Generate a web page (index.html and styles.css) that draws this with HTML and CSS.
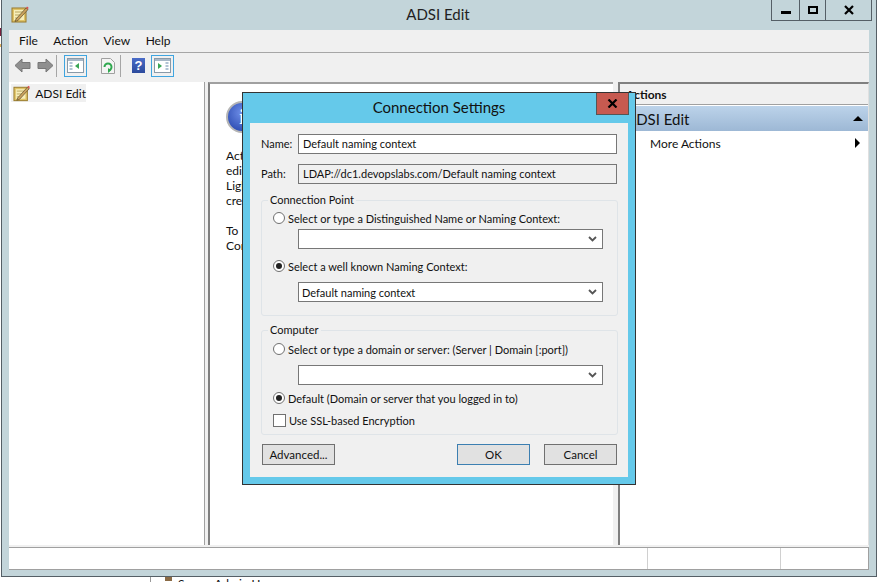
FILE: index.html
```html
<!DOCTYPE html>
<html>
	<head>
		<meta charset="UTF-8">
		<title>ADSI Edit</title>
		<link rel="stylesheet" href="styles.css">
	</head>
	<body>
		<div class="behind">
			<span class="behind-icon"></span>
			<span class="behind-text">Server Admin Users</span>
		</div>
		<div class="window">
			<div class="titlebar">
				<svg class="app-icon" width="18" height="18" viewBox="0 0 18 18">
					<rect x="1" y="3" width="14" height="14" fill="#e0c468" stroke="#97792a"/>
					<rect x="3" y="5" width="10" height="10" fill="#f7eeb9"/>
					<path d="M4 7h8M4 10h6M4 13h4" stroke="#b9a560"/>
					<path d="M5 14l10-11 2 1.500-10 11-3 1z" fill="#caa25e" stroke="#5d4d2c" stroke-width=".7"/>
					<path d="M15 3l1-1.500 1.500 1-.5 2z" fill="#d9534f"/>
				</svg>
				<div class="title">ADSI Edit</div>
				<div class="controls">
					<div class="ctl ctl-min"><i></i></div>
					<div class="ctl ctl-max"><i></i></div>
					<div class="ctl ctl-close">
						<svg width="12" height="10" viewBox="0 0 12 10"><path d="M2 1l8 8M10 1L2 9" stroke="#000" stroke-width="2.200"/></svg>
					</div>
				</div>
			</div>
			<div class="inner">
				<div class="menubar">
					<span>File</span><span>Action</span><span>View</span><span>Help</span>
				</div>
				<div class="toolbar">
					<svg class="tb-arrow" width="17" height="15" viewBox="0 0 17 15"><path d="M8 1L1 7.500 8 14v-3.500h8v-6H8z" fill="#8f8f8f" stroke="#777"/></svg>
					<svg class="tb-arrow" width="17" height="15" viewBox="0 0 17 15"><path d="M9 1l7 6.500L9 14v-3.500H1v-6h8z" fill="#8f8f8f" stroke="#777"/></svg>
					<div class="tb-sep"></div>
					<div class="tb-btn">
						<svg width="17" height="15" viewBox="0 0 17 15">
							<rect x=".5" y=".5" width="16" height="14" fill="#fff" stroke="#8a9aa8"/>
							<rect x="1" y="1" width="15" height="2" fill="#a8b8c8"/>
							<path d="M2.500 5h3M2.500 8h3M2.500 11h3" stroke="#6688aa" stroke-width="1.200"/>
							<path d="M12 5v6L8 8z" fill="#3aa655"/>
						</svg>
					</div>
					<svg class="tb-refresh" width="14" height="16" viewBox="0 0 14 16">
						<path d="M.5.500h9l4 4v11H.5z" fill="#f4f4f4" stroke="#a0a0a0"/>
						<path d="M3.500 9a3.500 3.500 0 1 1 3.500 3.500" fill="none" stroke="#2fa84f" stroke-width="2"/>
						<path d="M7 10v5l3-2.500z" fill="#2fa84f"/>
					</svg>
					<div class="tb-sep tb-sep2"></div>
					<div class="tb-help">?</div>
					<div class="tb-btn tb-btn2">
						<svg width="17" height="15" viewBox="0 0 17 15">
							<rect x=".5" y=".5" width="16" height="14" fill="#fff" stroke="#8a9aa8"/>
							<rect x="1" y="1" width="15" height="2" fill="#a8b8c8"/>
							<path d="M11.500 5h3M11.500 8h3M11.500 11h3" stroke="#6688aa" stroke-width="1.200"/>
							<path d="M4 5v6l4-3z" fill="#3aa655"/>
						</svg>
					</div>
				</div>
				<div class="panes">
					<div class="tree">
						<div class="tree-item">
							<svg width="18" height="18" viewBox="0 0 18 18">
								<rect x="1" y="3" width="14" height="14" fill="#e0c468" stroke="#97792a"/>
								<rect x="3" y="5" width="10" height="10" fill="#f7eeb9"/>
								<path d="M4 7h8M4 10h6M4 13h4" stroke="#b9a560"/>
								<path d="M5 14l10-11 2 1.500-10 11-3 1z" fill="#caa25e" stroke="#5d4d2c" stroke-width=".7"/>
								<path d="M15 3l1-1.500 1.500 1-.5 2z" fill="#d9534f"/>
							</svg>
							<span>ADSI Edit</span>
						</div>
					</div>
					<div class="center">
						<div class="info-icon">i</div>
						<p>Active Directory Service Interfaces Editor<br>editor for Active Directory objects and<br>Lightweight Directory Services data, and<br>create, modify and delete objects</p>
						<p>To connect, on the Action menu, click<br>Connect to</p>
					</div>
					<div class="actions">
						<div class="actions-head">Actions</div>
						<div class="actions-group"><span>ADSI Edit</span><i class="tri-up"></i></div>
						<div class="actions-row"><span>More Actions</span><i class="tri-right"></i></div>
					</div>
				</div>
				<div class="statusbar">
					<div class="st st1"></div>
					<div class="st st2"></div>
					<div class="st st3"></div>
				</div>
			</div>
		</div>

		<div class="dialog">
			<div class="dlg-title">
				<span>Connection Settings</span>
				<div class="dlg-close">
					<svg width="11" height="9" viewBox="0 0 11 9"><path d="M1.500 .5l8 8M9.500 .5l-8 8" stroke="#000" stroke-width="2.200"/></svg>
				</div>
			</div>
			<div class="dlg-body">
				<div class="field-row">
					<label>Name:</label>
					<input class="txt" type="text" value="Default naming context">
				</div>
				<div class="field-row field-row2">
					<label>Path:</label>
					<input class="txt txt-ro" type="text" value="LDAP://dc1.devopslabs.com/Default naming context" readonly>
				</div>

				<div class="group group1">
					<div class="legend">Connection Point</div>
					<div class="radio-row radio-row1"><span class="radio"></span>Select or type a Distinguished Name or Naming Context:</div>
					<div class="combo"><span></span><svg width="9" height="6" viewBox="0 0 9 6"><path d="M1 1l3.500 3.500L8 1" fill="none" stroke="#555" stroke-width="1.800"/></svg></div>
					<div class="radio-row radio-row1"><span class="radio on"></span>Select a well known Naming Context:</div>
					<div class="combo combo2"><span>Default naming context</span><svg width="9" height="6" viewBox="0 0 9 6"><path d="M1 1l3.500 3.500L8 1" fill="none" stroke="#555" stroke-width="1.800"/></svg></div>
				</div>

				<div class="group group2">
					<div class="legend">Computer</div>
					<div class="radio-row"><span class="radio"></span>Select or type a domain or server: (Server | Domain [:port])</div>
					<div class="combo combo2"><span></span><svg width="9" height="6" viewBox="0 0 9 6"><path d="M1 1l3.500 3.500L8 1" fill="none" stroke="#555" stroke-width="1.800"/></svg></div>
					<div class="radio-row radio-row3"><span class="radio on"></span>Default (Domain or server that you logged in to)</div>
					<div class="radio-row radio-row4"><span class="check"></span>Use SSL-based Encryption</div>
				</div>

				<div class="dlg-buttons">
					<button class="btn">Advanced...</button>
					<div class="spacer"></div>
					<button class="btn btn-ok">OK</button>
					<button class="btn">Cancel</button>
				</div>
			</div>
		</div>
	</body>
</html>
```

FILE: styles.css
```css
* {
	margin: 0;
	padding: 0;
	box-sizing: border-box;
}
html, body {
	width: 880px;
	height: 582px;
	overflow: hidden;
}
body {
	position: relative;
	background: #fff linear-gradient(#fff 28px, #7a1f3d 28px, #7a1f3d 36px, #fff 36px, #fff 44px, #e3b05a 44px, #e3b05a 47px, #fff 47px) no-repeat 0 0 / 1px 100%;
	font: 12px Lato, "Liberation Sans", sans-serif;
	color: #111;
}

/* stuff of the desktop that peeks out under the window */
.behind {
	position: absolute;
	left: 150px;
	top: 577px;
	width: 200px;
	height: 5px;
	border-left: 1px solid #999;
	display: flex;
	gap: 6px;
	overflow: hidden;
	padding-left: 14px;
}
.behind-icon {
	width: 7px;
	height: 4px;
	background: #8a6a45;
}
.behind-text {
	font-size: 12px;
	line-height: 14px;
}

.window {
	position: absolute;
	left: 1px;
	top: 0;
	width: 876px;
	height: 577px;
	background: #c3d5da;
	border: 1px solid #555f66;
	border-top: 0;
	display: flex;
	flex-direction: column;
}
.titlebar {
	height: 30px;
	flex: none;
	position: relative;
	display: flex;
	justify-content: center;
	align-items: center;
}
.app-icon {
	position: absolute;
	left: 9px;
	top: 5px;
}
.title {
	font-size: 15px;
	margin: -2px 0 0 -2px;
	color: #222;
}
.controls {
	position: absolute;
	left: 769px;
	top: 0;
	height: 21px;
	display: flex;
	border: 1px solid #555f66;
	border-top: 0;
}
.ctl {
	height: 20px;
	display: flex;
	align-items: center;
	justify-content: center;
	border-right: 1px solid #555f66;
}
.ctl-min { width: 28px; }
.ctl-max { width: 26px; }
.ctl-close { width: 45px; border-right: 0; }
.ctl-min i {
	display: block;
	width: 10px;
	height: 3px;
	background: #000;
	margin-top: 5px;
}
.ctl-max i {
	display: block;
	width: 10px;
	height: 8px;
	border: 2px solid #000;
	margin-top: -1px;
}

.inner {
	margin: 0 7px;
	width: 860px;
	height: 540px;
	flex: none;
	background: #f0f0f0;
	display: flex;
	flex-direction: column;
}
.menubar {
	height: 23px;
	flex: none;
	display: flex;
	align-items: center;
	gap: 15.500px;
	padding: 0 0 2px 10px;
	border-bottom: 1px solid #a6a6a6;
}
.toolbar {
	height: 29px;
	flex: none;
	display: flex;
	align-items: center;
	padding: 0 0 4px 5px;
}
.tb-arrow { margin-right: 6px; }
.tb-sep {
	width: 1px;
	height: 22px;
	background: #a6a6a6;
	margin: 0 7px 0 -4px;
}
.tb-btn {
	width: 23px;
	height: 22px;
	border: 1px solid #3fa5e0;
	display: flex;
	align-items: center;
	justify-content: center;
}
.tb-refresh { margin-left: 14px; }
.tb-sep2 { margin: 0 11px 0 5px; }
.tb-help {
	width: 13px;
	height: 15px;
	background: linear-gradient(#4a6cc8, #2c4a9c);
	color: #fff;
	font: bold 13px/15px "Liberation Sans", sans-serif;
	text-align: center;
	margin-right: 6px;
}

.panes {
	flex: 1;
	display: flex;
	gap: 3px;
	min-height: 0;
}
.tree {
	width: 196px;
	background: #fff;
	padding: 2px;
	border-right: 1px solid #a0a0a0;
}
.tree-item {
	display: inline-flex;
	align-items: center;
	gap: 5px;
	height: 18px;
	width: 75px;
	padding-left: 2px;
	background: #f0f0f0;
	white-space: nowrap;
}
.center {
	width: 405px;
	background: #fff;
	border-left: 2px solid #7f7f7f;
	border-top: 2px solid #a0a0a0;
	padding: 17px 0 0 16px;
	overflow: hidden;
	white-space: nowrap;
	line-height: 15px;
}
.center p {
	margin-bottom: 15px;
	word-spacing: 4px;
}
.info-icon {
	width: 32px;
	height: 32px;
	border-radius: 50%;
	background: radial-gradient(circle at 50% 35%, #6f8fe8, #1f3fa8);
	border: 2px solid #b5b5b5;
	color: #fff;
	font: bold 20px/28px "Liberation Serif", serif;
	text-align: center;
	margin-bottom: 15px;
}
.actions {
	width: 251px;
	margin-left: 2px;
	background: #fff;
	border-left: 2px solid #7f7f7f;
	border-top: 2px solid #808080;
	border-right: 1px solid #e0e0e0;
	white-space: nowrap;
}
.actions-head {
	height: 21px;
	font-weight: bold;
	line-height: 21px;
	padding-left: 6px;
	background: #f0f0f0;
	border-bottom: 1px solid #a0a0a0;
}
.actions-group {
	height: 25px;
	margin-top: 1px;
	display: flex;
	align-items: center;
	justify-content: space-between;
	padding: 0 5px 0 6px;
	background: linear-gradient(#bcd3ea, #9db8d5);
	font-size: 15px;
}
.tri-up {
	border: 5px solid transparent;
	border-top: 0;
	border-bottom: 5px solid #000;
}
.actions-row {
	height: 24px;
	display: flex;
	align-items: center;
	justify-content: space-between;
	padding: 0 8px 0 30px;
}
.tri-right {
	border: 5px solid transparent;
	border-right: 0;
	border-left: 5px solid #000;
}

.statusbar {
	height: 23px;
	flex: none;
	margin-top: 2px;
	background: #fff;
	border-top: 1px solid #a0a0a0;
	border-bottom: 1px solid #a0a0a0;
	display: flex;
}
.st {
	height: 100%;
	border-right: 1px solid #d0d0d0;
}
.st1 { width: 639px; }
.st2 { width: 133px; }
.st3 { flex: 1; border-right: 1px solid #a0a0a0; }

/* dialog */
.dialog {
	position: absolute;
	left: 242px;
	top: 92px;
	width: 394px;
	height: 393px;
	background: #65c9ea;
	border: 1px solid #333;
	padding: 0 7px 7px 7px;
	display: flex;
	flex-direction: column;
	font-size: 11px;
}
.dlg-title {
	height: 30px;
	flex: none;
	position: relative;
	display: flex;
	align-items: center;
	justify-content: center;
	font-size: 15px;
	color: #111;
	padding-bottom: 2px;
}
.dlg-close {
	position: absolute;
	right: -1px;
	top: 0;
	width: 33px;
	height: 22px;
	background: #c75a50;
	border: 1px solid #555;
	border-top: 0;
	display: flex;
	align-items: center;
	justify-content: center;
}
.dlg-body {
	flex: 1;
	background: #f0f0f0;
	padding: 11px 11px 0 11px;
	display: flex;
	flex-direction: column;
}
.field-row {
	display: flex;
	align-items: center;
	height: 20px;
}
.field-row2 { margin-top: 10px; }
.field-row label {
	width: 37px;
	flex: none;
	margin-top: -2px;
}
.txt {
	width: 320px;
	height: 20px;
	border: 1px solid #777;
	background: #fff;
	padding: 0 0 2px 4px;
	font: inherit;
	color: #111;
	outline: none;
}
.txt-ro { background: #f0f0f0; }
.group {
	position: relative;
	border: 1px solid #dfe4e8;
	border-radius: 3px;
	padding: 0 14px 0 11px;
	width: 357px;
}
.group1 { margin-top: 16px; height: 116px; }
.group2 { margin-top: 14px; height: 105px; }
.legend {
	position: absolute;
	left: 6px;
	top: -8px;
	padding: 0 2px;
	background: #f0f0f0;
	line-height: 14px;
}
.radio-row {
	display: flex;
	align-items: center;
	gap: 3px;
	height: 16px;
	margin-top: 10px;
	white-space: nowrap;
}
.radio-row1 { margin-top: 9px; }
.radio-row3 { margin-top: 5px; }
.radio-row4 { margin-top: 6px; }
.radio {
	width: 12px;
	height: 12px;
	flex: none;
	border: 1px solid #707070;
	border-radius: 50%;
	background: #fff;
	position: relative;
}
.radio.on::after {
	content: "";
	position: absolute;
	left: 2px;
	top: 2px;
	width: 6px;
	height: 6px;
	border-radius: 50%;
	background: #222;
}
.check {
	width: 13px;
	height: 13px;
	flex: none;
	border: 1px solid #707070;
	background: #fff;
}
.combo {
	height: 20px;
	margin: 3px 0 0 25px;
	width: 305px;
	border: 1px solid #777;
	background: #fff;
	display: flex;
	align-items: center;
	justify-content: space-between;
	padding: 0 5px 0 3px;
}
.combo2 { margin-top: 8px; }
.dlg-buttons {
	display: flex;
	margin: 9px 0 0 1px;
	width: 355px;
	gap: 14px;
}
.spacer { flex: 1; }
.btn {
	width: 73px;
	height: 21px;
	border: 1px solid #707070;
	background: #e1e1e1;
	font: 11.500px Lato, "Liberation Sans", sans-serif;
	color: #111;
}
.btn-ok { border-color: #3c7fb1; }
```
